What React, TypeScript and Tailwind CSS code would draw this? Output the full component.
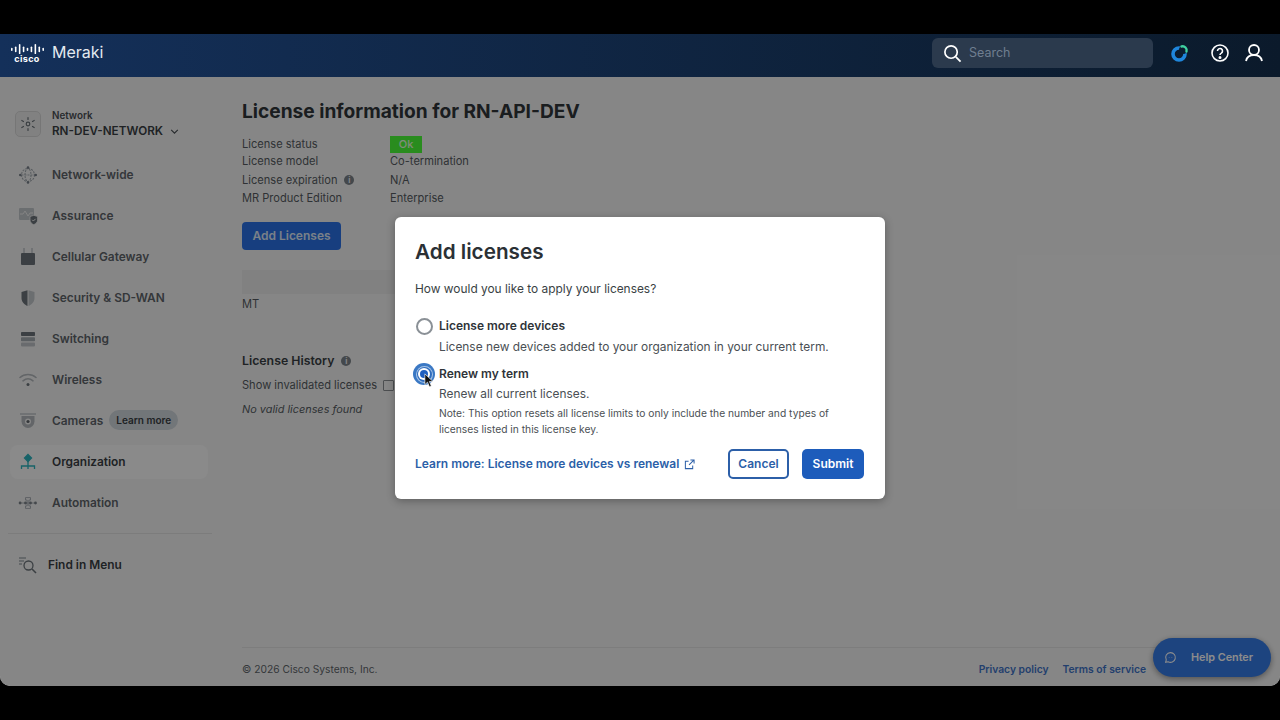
import type { ReactNode } from "react";

type NavItem = {
  label: string;
  icon: ReactNode;
  active?: boolean;
  badge?: string;
};

function CiscoLogo() {
  const bars = [
    [1, 7, 10],
    [6, 5, 12],
    [11, 1, 15],
    [16, 5, 12],
    [21, 7, 10],
    [26, 5, 12],
    [31, 1, 15],
    [36, 5, 12],
    [41, 7, 10],
  ];
  return (
    <div className="flex w-[34px] flex-col items-center">
      <svg viewBox="0 0 42 16" preserveAspectRatio="none" className="h-[10px] w-[33px]">
        {bars.map(([x, y, y2]) => (
          <line key={x} x1={x} x2={x} y1={y} y2={y2} stroke="#fff" strokeWidth="2" strokeLinecap="round" />
        ))}
      </svg>
      <span className="mt-[1px] text-[9px] leading-[8px] font-bold tracking-[0.4px] text-white">cisco</span>
    </div>
  );
}

const navItems: NavItem[] = [
  {
    label: "Network-wide",
    icon: (
      <svg viewBox="0 0 20 20" className="h-5 w-5" fill="none" stroke="#a4abb1" strokeWidth="1.1" strokeDasharray="2 1">
        <circle cx="10" cy="10" r="6.5" />
        <ellipse cx="10" cy="10" rx="3" ry="6.5" />
        <path d="M3.5 10h13" />
        <circle cx="10" cy="2.5" r="1.3" fill="#78808a" stroke="none" />
        <circle cx="10" cy="17.5" r="1.3" fill="#78808a" stroke="none" />
        <circle cx="2.3" cy="10" r="1.3" fill="#78808a" stroke="none" />
        <circle cx="17.7" cy="10" r="1.3" fill="#78808a" stroke="none" />
      </svg>
    ),
  },
  {
    label: "Assurance",
    icon: (
      <svg viewBox="0 0 20 20" className="h-5 w-5">
        <rect x="1" y="2" width="15" height="12" rx="1" fill="#c4c8cc" />
        <path d="M2 8h3l2-3 3 5 2-3h3" fill="none" stroke="#f0f0f0" strokeWidth="1" />
        <path d="M12 10.500l3.800-1.200 3.800 1.200v3.600c0 2.400-2 3.800-3.800 4.600-1.800-.8-3.800-2.200-3.800-4.600z" fill="#6c747a" stroke="#f5f5f5" strokeWidth=".8" />
        <path d="M14.200 13.800l1.200 1.200 2.200-2.200" fill="none" stroke="#f5f5f5" strokeWidth="1" />
      </svg>
    ),
  },
  {
    label: "Cellular Gateway",
    icon: (
      <svg viewBox="0 0 20 20" className="h-5 w-5">
        <path d="M6 1v6M14 1v6" stroke="#a4abb1" strokeWidth="1" />
        <rect x="3" y="6" width="14" height="12" rx="1" fill="#6c747a" />
      </svg>
    ),
  },
  {
    label: "Security & SD-WAN",
    icon: (
      <svg viewBox="0 0 20 20" className="h-5 w-5">
        <path d="M9.500 2.200L3.500 4v6c0 4 3 6.600 6 8z" fill="#6c747a" />
        <path d="M10.500 2.200l6 1.800v6c0 4-3 6.600-6 8z" fill="#c4c8cc" />
      </svg>
    ),
  },
  {
    label: "Switching",
    icon: (
      <svg viewBox="0 0 20 20" className="h-5 w-5">
        <rect x="3" y="3" width="14" height="4" rx=".8" fill="#6c747a" />
        <rect x="3" y="8.200" width="14" height="4" rx=".8" fill="#a4abb1" />
        <rect x="3" y="13.400" width="14" height="4" rx=".8" fill="#c0c4c8" />
      </svg>
    ),
  },
  {
    label: "Wireless",
    icon: (
      <svg viewBox="0 0 20 20" className="h-5 w-5" fill="none" stroke="#b4b9bd" strokeWidth="1.600" strokeLinecap="round">
        <path d="M2 7.500c4.500-4 11.500-4 16 0" />
        <path d="M5 10.800c3-2.500 7-2.500 10 0" />
        <circle cx="10" cy="14.500" r="1.500" fill="#6c747a" stroke="none" />
      </svg>
    ),
  },
  {
    label: "Cameras",
    icon: (
      <svg viewBox="0 0 20 20" className="h-5 w-5">
        <path d="M2 3h16" stroke="#a4abb1" strokeWidth="1" />
        <path d="M3.500 5h13v5.500a6.500 6.500 0 0 1-13 0z" fill="#b4b9bd" />
        <circle cx="10" cy="10.500" r="3" fill="#f5f5f5" />
        <circle cx="10" cy="10.500" r="1.600" fill="#5f656b" />
      </svg>
    ),
    badge: "Learn more",
  },
  {
    label: "Organization",
    active: true,
    icon: (
      <svg viewBox="0 0 20 20" className="h-5 w-5" fill="none" stroke="#2ab4be" strokeWidth="1.300">
        <path d="M10 2.500l3.500 3.500-3.500 3.500-3.500-3.500z" fill="#2ab4be" />
        <path d="M10 9v5M3.500 17v-3h13v3M10 14v3" />
      </svg>
    ),
  },
  {
    label: "Automation",
    icon: (
      <svg viewBox="0 0 24 20" className="h-5 w-6" fill="none" stroke="#a4abb1" strokeWidth="1.100">
        <path d="M9 3.500h6v3h-2v7h2v3H9v-3h2v-7H9z" />
        <path d="M3 10h18" />
        <circle cx="2.500" cy="10" r="1.700" fill="#7c838a" stroke="none" />
        <circle cx="9" cy="10" r="1.700" fill="#7c838a" stroke="none" />
        <circle cx="15" cy="10" r="1.700" fill="#7c838a" stroke="none" />
        <circle cx="21" cy="10" r="1.700" fill="#7c838a" stroke="none" />
      </svg>
    ),
  },
];

function Sidebar() {
  return (
    <aside className="flex w-[230px] shrink-0 flex-col pt-[31px]">
      <div className="ml-[15px] flex items-center gap-[11px]">
        <div className="flex h-[26px] w-[26px] items-center justify-center rounded-[5px] border border-[#d8d8d8] bg-[#ececec]">
          <svg viewBox="0 0 16 16" className="h-4 w-4" fill="none" stroke="#6c747a" strokeWidth="1.200" strokeLinecap="round">
            <circle cx="8" cy="8" r="1.800" />
            <path d="M8 1.500v2M8 12.500v2M1.800 4.500l1.700 1M12.500 10.500l1.700 1M1.800 11.500l1.700-1M12.500 5.500l1.700-1" />
          </svg>
        </div>
        <div>
          <p className="text-[9.800px] leading-[15px] font-semibold text-[#4a4f54]">Network</p>
          <p className="flex items-center gap-[7px] text-[11.700px] leading-[17px] font-semibold text-[#3a3f44]">
            RN-DEV-NETWORK
            <svg viewBox="0 0 10 6" className="h-[5px] w-[9px]" fill="none" stroke="#4a4f54" strokeWidth="1.400">
              <path d="M1 1l4 4 4-4" />
            </svg>
          </p>
        </div>
      </div>

      <nav className="mt-[18px] flex flex-col gap-[7px]">
        {navItems.map((item) => (
          <div
            key={item.label}
            className={`ml-[10px] flex h-[34px] w-[198px] items-center rounded-[8px] pl-[8px] ${item.active ? "bg-[#fbfbfb]" : ""}`}
          >
            <span className="flex w-[20px] justify-center">{item.icon}</span>
            <span className={`ml-[14px] text-[11.900px] font-semibold ${item.active ? "text-[#3a3f44]" : "text-[#5f656b]"}`}>
              {item.label}
            </span>
            {item.badge && (
              <span className="mb-[2px] ml-[6px] rounded-full bg-[#d0d7dc] px-[7px] py-[3.500px] text-[10px] leading-[13px] font-semibold text-[#3a3f44]">
                {item.badge}
              </span>
            )}
          </div>
        ))}
      </nav>

      <div className="mt-[13px] ml-[8px] w-[204px] border-t border-[#e2e2e2]" />

      <div className="mt-[21px] ml-[18px] flex items-center gap-[10px]">
        <svg viewBox="0 0 20 20" className="h-5 w-5" fill="none" stroke="#6c747a" strokeWidth="1.300">
          <path d="M1 3h7M1 6h5M1 9h3" stroke="#a4abb1" />
          <circle cx="10.500" cy="10.500" r="4.500" />
          <path d="M14 14l4 4" strokeWidth="1.600" />
        </svg>
        <span className="text-[11.900px] font-semibold text-[#3a3f44]">Find in Menu</span>
      </div>
    </aside>
  );
}

function InfoDot() {
  return (
    <span className="ml-[7px] inline-flex h-[10px] w-[10px] items-center justify-center rounded-full bg-[#7c838a] text-[8px] leading-none font-bold text-[#f5f5f5]">
      i
    </span>
  );
}

function LicensePage() {
  const textClass = "text-[11.100px] text-[#565c62]";
  return (
    <main className="flex min-w-0 flex-1 flex-col pt-[22px] pl-[12px]">
      <h1 className="text-[19.150px] leading-[24px] font-bold text-[#30353a]">License information for RN-API-DEV</h1>

      <div className="mt-[12px] grid w-[300px] grid-cols-[148px_1fr] items-center">
        <span className={`${textClass} leading-[18px]`}>License status</span>
        <span className="flex h-[17px] w-[32px] items-center justify-center bg-[#4cff38] text-[11px] font-medium text-[#e8ffdf]">Ok</span>
        <span className={`${textClass} leading-[17px]`}>License model</span>
        <span className={`${textClass} leading-[17px]`}>Co-termination</span>
        <span className={`${textClass} flex items-center leading-[20px]`}>
          License expiration
          <InfoDot />
        </span>
        <span className={`${textClass} leading-[20px]`}>N/A</span>
        <span className={`${textClass} leading-[17px]`}>MR Product Edition</span>
        <span className={`${textClass} leading-[17px]`}>Enterprise</span>
      </div>

      <button className="mt-[15px] h-[28px] w-[99px] rounded-[4px] bg-[#2a72e8] text-[12px] font-semibold text-[#dfe9f8]">
        Add Licenses
      </button>

      <div className="mt-[20px] h-[24px] w-[500px] bg-[#ebebeb]" />
      <p className={`${textClass} mt-[1px] leading-[18px]`}>MT</p>

      <h2 className="mt-[39px] flex items-center text-[12.300px] leading-[18px] font-semibold text-[#3a3f44]">
        License History
        <InfoDot />
      </h2>
      <label className={`${textClass} mt-[6px] flex items-center leading-[18px]`}>
        Show invalidated licenses
        <span className="ml-[6px] h-[11px] w-[11px] rounded-[1px] border border-[#8a8e92]" />
      </label>
      <p className="mt-[6px] text-[10.900px] leading-[18px] text-[#565c62] italic">No valid licenses found</p>

      <footer className="mt-auto mr-[36px] flex h-[39px] items-end justify-between border-t border-[#e4e4e4] pr-[98px] pb-[9px]">
        <span className="text-[10.250px] leading-[16px] text-[#5f656b]">© 2026 Cisco Systems, Inc.</span>
        <span className="flex gap-[14px] text-[10.300px] leading-[16px] font-semibold text-[#3f74c8]">
          <span>Privacy policy</span>
          <span>Terms of service</span>
        </span>
      </footer>
    </main>
  );
}

function RadioRow({ checked, label, children }: { checked?: boolean; label: string; children: ReactNode }) {
  return (
    <div className="flex gap-[6px]">
      <span className="relative flex h-[18px] w-[18px] shrink-0 items-center justify-center">
        {checked ? (
          <>
            <span className="absolute top-[-2px] left-[-2px] flex h-[22px] w-[22px] items-center justify-center rounded-full bg-[#3a78c4]">
              <span className="flex h-[17px] w-[17px] items-center justify-center rounded-full bg-[#a9c6e8]">
                <span className="flex h-[15px] w-[15px] items-center justify-center rounded-full bg-[#2f6cbd]">
                  <span className="flex h-[12px] w-[12px] items-center justify-center rounded-full bg-white">
                    <span className="h-[8px] w-[8px] rounded-full bg-[#1f5fbf]" />
                  </span>
                </span>
              </span>
            </span>
            <svg viewBox="0 0 12 18" className="absolute top-[8px] left-[9px] h-[15px] w-[10px]">
              <path d="M1 1v13l3.200-3 2.300 5.500 2.300-1-2.300-5.300h4.300z" fill="#111" stroke="#fff" strokeWidth=".8" />
            </svg>
          </>
        ) : (
          <span className="h-[17px] w-[17px] rounded-full border-2 border-[#8a9096] bg-white" />
        )}
      </span>
      <div>
        <p className="text-[12px] leading-[18px] font-semibold text-[#2f3439]">{label}</p>
        {children}
      </div>
    </div>
  );
}

function AddLicensesModal() {
  return (
    <div className="absolute inset-0 flex items-center justify-center rounded-b-[10px] bg-black/45">
      <div className="mb-[4px] h-[282px] w-[490px] rounded-[6px] bg-white pt-[20px] pr-[21px] pl-[20px] shadow-[0_2px_8px_rgba(0,0,0,0.3)]">
        <h2 className="text-[20.700px] leading-[30px] font-semibold text-[#2b3035]">Add licenses</h2>
        <p className="mt-[13px] text-[11.900px] leading-[18px] text-[#3a3f44]">How would you like to apply your licenses?</p>

        <div className="mt-[19px]">
          <RadioRow label="License more devices">
            <p className="mt-[3px] text-[11.900px] leading-[18px] text-[#4a4f54]">License new devices added to your organization in your current term.</p>
          </RadioRow>
        </div>
        <div className="mt-[9px]">
          <RadioRow checked label="Renew my term">
            <p className="mt-[2px] text-[11.900px] leading-[18px] text-[#4a4f54]">Renew all current licenses.</p>
            <p className="mt-[3px] w-[400px] text-[10.250px] leading-[15.500px] text-[#4a4f54]">
              Note: This option resets all license limits to only include the number and types of licenses listed in this license key.
            </p>
          </RadioRow>
        </div>

        <div className="mt-[12px] flex items-center">
          <a className="flex items-center gap-[5px] text-[12px] font-semibold text-[#2c5fa8]">
            Learn more: License more devices vs renewal
            <svg viewBox="0 0 12 12" className="h-[11px] w-[11px]" fill="none" stroke="#2c5fa8" strokeWidth="1.100">
              <path d="M5 2.500H1.500v8h8V7M7 1h4v4M11 1L5.500 6.500" />
            </svg>
          </a>
          <button className="ml-auto h-[30px] w-[61px] rounded-[5px] border-2 border-[#2c5fa8] text-[12px] font-semibold text-[#2c5fa8]">Cancel</button>
          <button className="ml-[13px] h-[30px] w-[62px] rounded-[5px] bg-[#1d5cbb] text-[12px] font-semibold text-white">Submit</button>
        </div>
      </div>
    </div>
  );
}

export default function App() {
  return (
    <div className="flex h-[720px] flex-col overflow-hidden bg-black py-[34px] font-['Inter',sans-serif]">
      <div className="relative flex min-h-0 flex-1 flex-col overflow-hidden rounded-b-[10px] bg-[#f5f5f5]">
        <header className="relative z-10 flex h-[43px] shrink-0 items-center bg-gradient-to-r from-[#14305a] to-[#0b1a2b] pr-[16px] pb-[5px] pl-[10px]">
          <CiscoLogo />
          <span className="mb-[2px] ml-[8px] text-[16px] font-normal text-[#e4eaf0]">Meraki</span>
          <div className="ml-auto flex h-[30px] w-[221px] items-center rounded-[6px] bg-[#2b3a4d] pl-[11px]">
            <svg viewBox="0 0 20 20" className="h-[19px] w-[19px]" fill="none" stroke="#fff" strokeWidth="1.800">
              <circle cx="8.500" cy="8.500" r="6.500" />
              <path d="M13.500 13.500l5 5" />
            </svg>
            <span className="mt-[1px] ml-[7px] text-[12.500px] text-[#6f7e90]">Search</span>
          </div>
          <svg viewBox="0 0 20 20" className="ml-[17px] h-[20px] w-[20px]">
            <circle cx="9" cy="11" r="6" fill="none" stroke="#1f86dc" strokeWidth="3.600" />
            <circle cx="13" cy="7" r="4" fill="#0b1d30" />
            <path d="M11.500 3.500a4 4 0 0 1 5 5" fill="none" stroke="#3fd0a0" strokeWidth="2.400" strokeLinecap="round" />
          </svg>
          <svg viewBox="0 0 20 20" className="ml-[20px] h-[20px] w-[20px]" fill="none" stroke="#fff" strokeWidth="1.600">
            <circle cx="10" cy="10" r="8" />
            <path d="M7.500 8a2.500 2.500 0 1 1 3.800 2.100c-.9.500-1.300 1-1.300 2" />
            <circle cx="10" cy="14.500" r=".7" fill="#fff" />
          </svg>
          <svg viewBox="0 0 20 20" className="ml-[14px] h-[20px] w-[20px]" fill="none" stroke="#fff" strokeWidth="1.800">
            <circle cx="10" cy="7" r="5" />
            <path d="M2 18c.8-4 4-6 8-6s7.200 2 8 6" />
          </svg>
        </header>

        <div className="flex min-h-0 flex-1">
          <Sidebar />
          <LicensePage />
        </div>

        <button className="absolute right-[9px] bottom-[9px] flex h-[39px] w-[118px] items-center rounded-full bg-[#357ce8] pl-[11px] text-[10.800px] font-semibold text-white shadow-[0_2px_6px_rgba(0,0,0,0.4)]">
          <svg viewBox="0 0 16 16" className="h-[13px] w-[13px]" fill="none" stroke="#fff" strokeWidth="1.300">
            <path d="M8 2a6 6 0 1 1-3 11.200L2 14l.8-3A6 6 0 0 1 8 2z" />
            <path d="M6 8h.5M9.500 8h.5" />
          </svg>
          <span className="mt-[1px] ml-[14px]">Help Center</span>
        </button>

        <AddLicensesModal />
      </div>
    </div>
  );
}
